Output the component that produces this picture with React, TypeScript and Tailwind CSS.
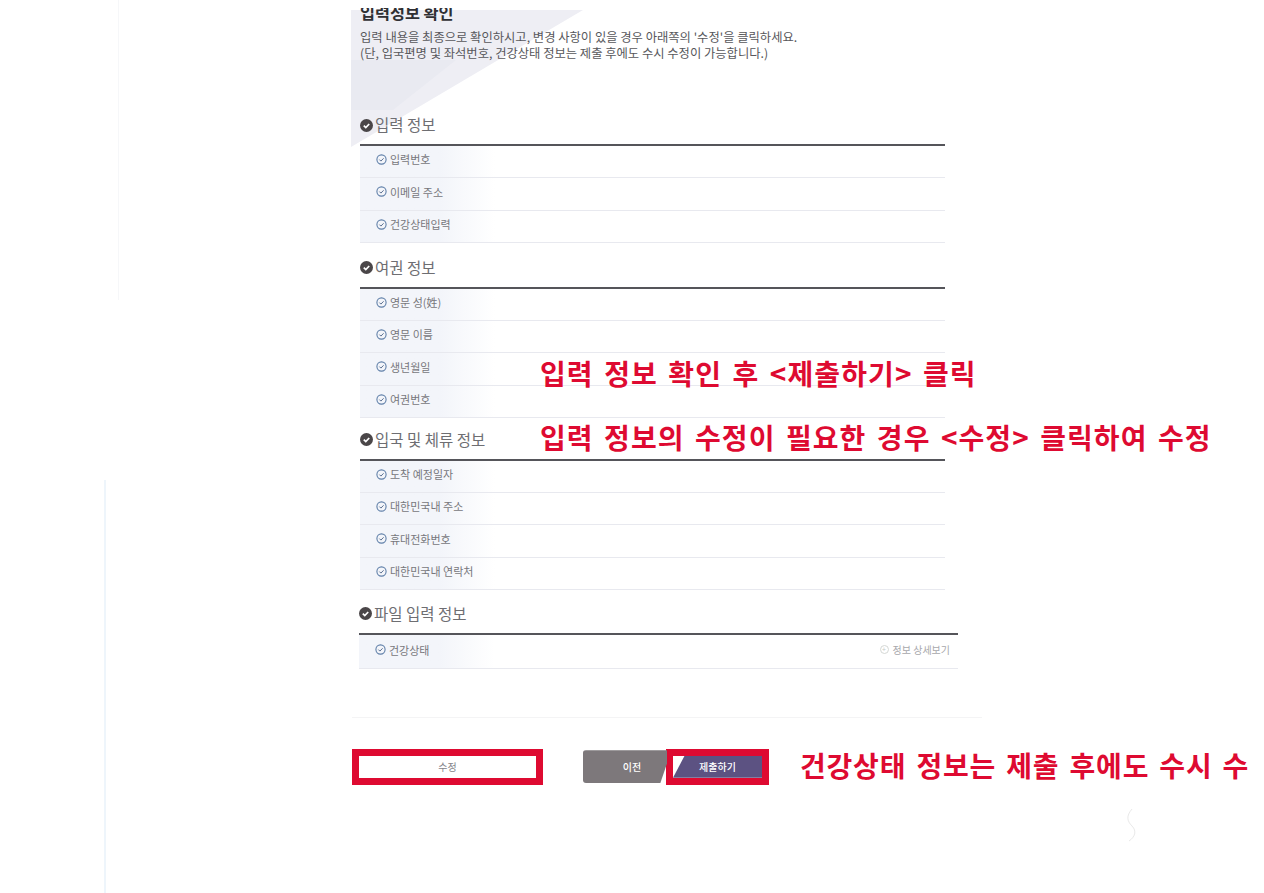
const sections = [
  { title: "입력 정보", rows: ["입력번호", "이메일 주소", "건강상태입력"], top: "mt-[52px]" },
  { title: "여권 정보", rows: ["영문 성(姓)", "영문 이름", "생년월일", "여권번호"], top: "mt-[13px]" },
  { title: "입국 및 체류 정보", rows: ["도착 예정일자", "대한민국내 주소", "휴대전화번호", "대한민국내 연락처"], top: "mt-[10px]" },
];

const BigCheck = () => (
  <svg width="13" height="13" viewBox="0 0 13 13" className="shrink-0">
    <circle cx="6.5" cy="6.5" r="6.5" fill="#4a4648" />
    <path d="M3.8 6.6l2 2 3.4-3.6" fill="none" stroke="#fff" strokeWidth="1.7" />
  </svg>
);

const SmallCheck = () => (
  <svg width="11" height="11" viewBox="0 0 11 11" className="shrink-0">
    <circle cx="5.5" cy="5.5" r="4.6" fill="none" stroke="#5f7fa8" strokeWidth="1.1" />
    <path d="M3.4 5.6l1.5 1.5 2.7-2.8" fill="none" stroke="#5a6f90" strokeWidth="1" />
  </svg>
);

const Row = ({ label, extra }: { label: string; extra?: boolean }) => (
  <div className={`flex items-center gap-[3px] border-b border-[#e8e9ef] bg-gradient-to-r from-[#f3f5fa] from-[80px] to-transparent to-[135px] pl-[16px] pr-[8px] text-[11px] text-[#77777c] ${extra ? "h-[34px] pb-[3px]" : "h-[32.25px] pb-[4px]"}`}>
    <SmallCheck />
    <span>{label}</span>
    {extra && (
      <span className="ml-auto flex items-center gap-[4px] text-[10px] text-[#a8a8ac]">
        <span className="flex h-[9px] w-[9px] items-center justify-center rounded-full border border-[#d5d8d5] text-[7px] leading-none text-[#c5c9c5]">+</span>
        정보 상세보기
      </span>
    )}
  </div>
);

const Heading = ({ title, top }: { title: string; top: string }) => (
  <div className={`${top} flex h-[24px] items-center gap-[2px] text-[15.5px] text-[#6e6e72]`}>
    <BigCheck />
    <span>{title}</span>
  </div>
);

const redText = "absolute whitespace-nowrap text-[28px] font-bold leading-[40px] text-[#de0a31] [word-spacing:3px]";

export default function App() {
  return (
    <div className="relative h-[893px] w-[1264px] overflow-hidden bg-white font-['Noto_Sans_CJK_KR','Noto_Sans',sans-serif]">
      <div className="absolute left-[351px] top-[10px] h-[137px] w-[232px] bg-[#eeeef4] [clip-path:polygon(0_0,100%_0,0_100%)]" />
      <div className="absolute left-[351px] top-[60px] h-[50px] w-[105px] bg-[#e9eaf1] [clip-path:polygon(0_0,100%_0,40%_100%,0_100%)]" />
      <div className="absolute bottom-0 left-[104px] top-[480px] w-[2px] bg-[#eef5fb]" />
      <div className="absolute left-[118px] top-0 h-[300px] w-[1px] bg-[#f6f7f9]" />
      <svg width="14" height="34" viewBox="0 0 14 34" className="absolute left-[1124px] top-[808px]">
        <path d="M8 1C2 8 3 13 8 18s3 11-3 15" fill="none" stroke="#e9e9e9" strokeWidth="1" />
      </svg>

      <main className="relative ml-[352px] w-[606px] pt-[8px]">
        <div className="h-[15px] overflow-hidden pl-[8px]">
          <h1 className="mt-[-6px] text-[16.3px] font-bold leading-[20px] text-[#2f2f33]">입력성보 확인</h1>
        </div>
        <p className="mt-[6px] pl-[8px] text-[12.3px] leading-[16px] text-[#57575b]">
          입력 내용을 최종으로 확인하시고, 변경 사항이 있을 경우 아래쪽의 '수정'을 클릭하세요.
          <br />
          (단, 입국편명 및 좌석번호, 건강상태 정보는 제출 후에도 수시 수정이 가능합니다.)
        </p>

        <div className="w-[593px] pl-[8px]">
          {sections.map((s) => (
            <section key={s.title}>
              <Heading title={s.title} top={s.top} />
              <div className="mt-[7px] border-t-2 border-[#55555a]">
                {s.rows.map((r) => (
                  <Row key={r} label={r} />
                ))}
              </div>
            </section>
          ))}
        </div>

        <section className="pl-[7px]">
          <Heading title="파일 입력 정보" top="mt-[12px]" />
          <div className="mt-[7px] border-t-2 border-[#55555a]">
            <Row label="건강상태" extra />
          </div>
        </section>

        <div className="mt-[48px] h-px w-[630px] bg-[#f4f4f5]" />

        <div className="mt-[31px] flex items-center">
          <button className="flex h-[36px] w-[191px] items-center justify-center border-[7px] border-[#de0a31] bg-white text-[10px] text-[#85858a]">
            수정
          </button>
          <button className="ml-[40px] flex h-[33px] w-[84px] items-center justify-center rounded-l-[3px] bg-[#7d787b] pl-[14px] text-[10px] font-medium text-white [clip-path:polygon(0_0,100%_0,100%_40%,92%_100%,0_100%)]">
            이전
          </button>
          <div className="ml-[-1px] h-[36px] w-[103px] border-[7px] border-[#de0a31] bg-white">
            <button className="flex h-full w-full items-center justify-center bg-[#5c5282] text-[10px] font-medium text-white [clip-path:polygon(13%_0,100%_0,100%_100%,0_100%)]">
              제출하기
            </button>
          </div>
        </div>
      </main>

      <p className={`${redText} left-[540px] top-[353px] tracking-[1.1px]`}>입력 정보 확인 후 &lt;제출하기&gt; 클릭</p>
      <p className={`${redText} left-[540px] top-[417px] tracking-[1.07px]`}>입력 정보의 수정이 필요한 경우 &lt;수정&gt; 클릭하여 수정</p>
      <p className={`${redText} left-[800px] top-[745px] tracking-[0.8px]`}>건강상태 정보는 제출 후에도 수시 수</p>
    </div>
  );
}
